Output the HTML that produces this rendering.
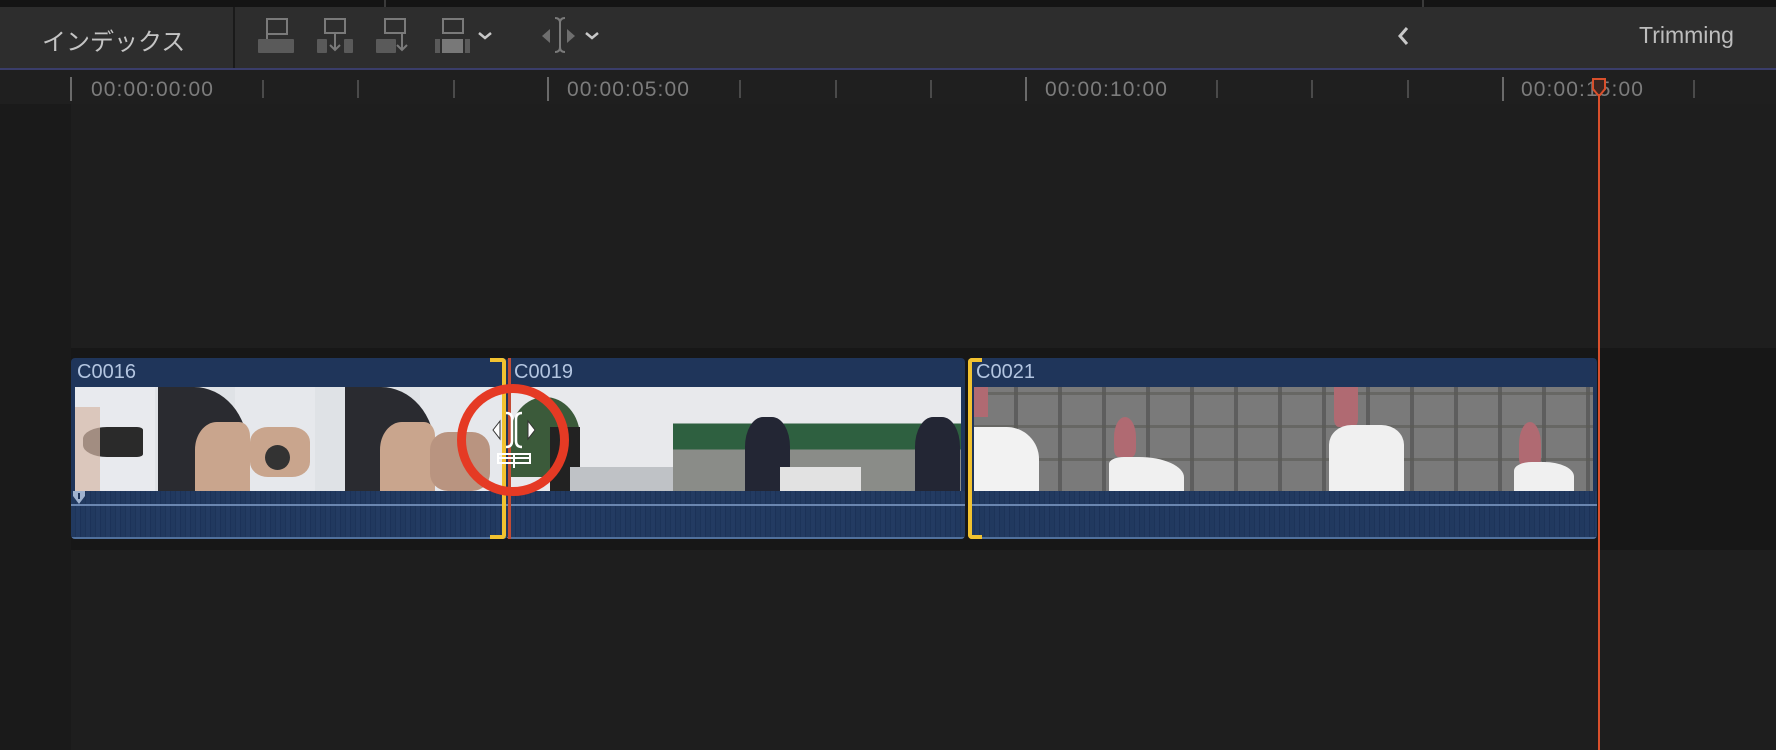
<!DOCTYPE html>
<html><head><meta charset="utf-8"><style>
*{margin:0;padding:0;box-sizing:border-box}
body{width:1776px;height:750px;background:#1e1e1e;position:relative;overflow:hidden;font-family:"Liberation Sans","Noto Sans CJK JP",sans-serif}
.a{position:absolute}
.tick{position:absolute;width:2px;background:#4a4a4a}
.tl{position:absolute;top:78px;color:#7c7c7c;font-size:21px;letter-spacing:1.1px}
.clip{position:absolute;top:358px;height:181px;background:#1f355a;border-radius:4px;overflow:hidden}
.hdr{position:absolute;left:6px;top:3px;color:#b3c5e0;font-size:20px}
.th{position:absolute;top:29px;height:104px;overflow:hidden}
.aud{position:absolute;left:0;right:0;top:133px;bottom:0;background:repeating-linear-gradient(90deg,#21395f 0 4px,#1d3459 4px 5px,#233b62 5px 9px,#1c3258 9px 10px)}
.aud:before{content:"";position:absolute;left:0;right:0;top:13px;height:2px;background:#6a86b0}
.aud:after{content:"";position:absolute;left:0;right:0;bottom:0;height:2px;background:#50709c}
</style></head><body>
<div class="a" style="left:0;top:0;width:1776px;height:7px;background:#141414"></div>
<div class="a" style="left:384px;top:0;width:2px;height:7px;background:#3a3a3a"></div>
<div class="a" style="left:1422px;top:0;width:2px;height:7px;background:#3a3a3a"></div>
<div class="a" style="left:0;top:7px;width:1776px;height:61px;background:#2d2d2d"></div>
<div class="a" style="left:233px;top:7px;width:2px;height:61px;background:#1a1a1a"></div>
<div class="a" style="left:0;top:68px;width:1776px;height:2px;background:#3a3d6a"></div>
<div class="a" style="left:42px;top:22px;color:#c4c4c4;font-size:24px">インデックス</div>
<svg class="a" style="left:0;top:0" width="620" height="68">
 <g fill="none" stroke="#7a7a7a" stroke-width="2">
  <rect x="267" y="19" width="20" height="15"/><line x1="267" y1="34" x2="267" y2="41"/>
  <rect x="325" y="19" width="20" height="14"/><line x1="335" y1="33" x2="335" y2="50"/><polyline points="330,45 335,50 340,45"/>
  <rect x="385" y="19" width="20" height="14"/><line x1="402" y1="33" x2="402" y2="50"/><polyline points="397,45 402,50 407,45"/>
  <rect x="443" y="19" width="20" height="14"/>
  <path d="M555 18 q5 0 5 5 v24 q0 5 -5 5 M565 18 q-5 0 -5 5 v24 q0 5 5 5"/>
 </g>
 <g fill="none" stroke="#c8c8c8" stroke-width="2.5">
  <polyline points="479,33 485,38 491,33"/>
  <polyline points="586,33 592,38 598,33"/>
 </g>
 <g fill="#5a5a5a">
  <rect x="258" y="39" width="36" height="14" rx="1"/>
  <rect x="317" y="39" width="10" height="14" rx="1"/><rect x="344" y="39" width="9" height="14" rx="1"/>
  <rect x="376" y="39" width="20" height="14" rx="1"/>
  <rect x="435" y="39" width="5" height="14"/><rect x="442" y="39" width="21" height="14" fill="#787878"/><rect x="465" y="39" width="5" height="14"/>
  <polygon points="550,29 542,36 550,43" fill="#6e6e6e"/><polygon points="567,29 575,36 567,43" fill="#6e6e6e"/>
 </g>
</svg>
<svg class="a" style="left:1396px;top:25px" width="16" height="22"><polyline points="11,3 4,11 11,19" fill="none" stroke="#c8c8c8" stroke-width="3"/></svg>
<div class="a" style="left:1639px;top:22px;color:#bdbdbd;font-size:23px">Trimming</div>
<div class="a" style="left:0;top:70px;width:1776px;height:34px;background:#1f1f1f"></div>
<div class="tick" style="left:70px;top:77px;height:24px;background:#6a6a6a"></div>
<div class="tick" style="left:547px;top:77px;height:24px;background:#6a6a6a"></div>
<div class="tick" style="left:1025px;top:77px;height:24px;background:#6a6a6a"></div>
<div class="tick" style="left:1502px;top:77px;height:24px;background:#6a6a6a"></div>
<div class="tick" style="left:262px;top:80px;height:18px"></div><div class="tick" style="left:357px;top:80px;height:18px"></div><div class="tick" style="left:453px;top:80px;height:18px"></div>
<div class="tick" style="left:739px;top:80px;height:18px"></div><div class="tick" style="left:835px;top:80px;height:18px"></div><div class="tick" style="left:930px;top:80px;height:18px"></div>
<div class="tick" style="left:1216px;top:80px;height:18px"></div><div class="tick" style="left:1311px;top:80px;height:18px"></div><div class="tick" style="left:1407px;top:80px;height:18px"></div>
<div class="tick" style="left:1693px;top:80px;height:18px"></div>
<div class="tl" style="left:91px">00:00:00:00</div>
<div class="tl" style="left:567px">00:00:05:00</div>
<div class="tl" style="left:1045px">00:00:10:00</div>
<div class="tl" style="left:1521px">00:00:15:00</div>
<div class="a" style="left:0;top:104px;width:71px;height:646px;background:#1a1a1a"></div>
<div class="a" style="left:71px;top:348px;width:1705px;height:202px;background:#171717"></div>
<div class="clip" style="left:71px;width:436px">
 <div class="hdr">C0016</div>
 <div class="th" style="left:4px;width:428px;background:linear-gradient(90deg,#e8eaee 0 80px,#dfe2e6 80px 160px,#e6e8ec 160px 240px,#dfe2e6 240px 345px,#e6e8ec 345px)">
  <div class="a" style="left:8px;top:40px;width:60px;height:30px;background:#2a2a2a;border-radius:40% 10% 10% 40%"></div>
  <div class="a" style="left:0;top:20px;width:25px;height:84px;background:#d6b8a6;opacity:.7"></div>
  <div class="a" style="left:83px;top:0;width:90px;height:104px;background:#2a2b30;border-radius:0 60% 0 0"></div>
  <div class="a" style="left:120px;top:35px;width:55px;height:69px;background:#c9a58d;border-radius:40% 20% 0 0"></div>
  <div class="a" style="left:175px;top:40px;width:60px;height:50px;background:#c9a58d;border-radius:30%"></div>
  <div class="a" style="left:190px;top:58px;width:25px;height:25px;background:#333;border-radius:50%"></div>
  <div class="a" style="left:270px;top:0;width:90px;height:104px;background:#2a2b30;border-radius:0 60% 0 0"></div>
  <div class="a" style="left:305px;top:35px;width:55px;height:69px;background:#c9a58d;border-radius:40% 20% 0 0"></div>
  <div class="a" style="left:355px;top:45px;width:60px;height:59px;background:#b99480;border-radius:30%"></div>
 </div>
 <div class="aud"></div>
</div>
<div class="clip" style="left:506px;width:459px">
 <div class="hdr" style="left:8px">C0019</div>
 <div class="th" style="left:4px;width:451px;background:#e8e9ec">
  <div class="a" style="left:0;top:10px;width:70px;height:80px;background:#3b5a3a;border-radius:50% 50% 0 0"></div>
  <div class="a" style="left:40px;top:40px;width:30px;height:64px;background:#222"></div>
  <div class="a" style="left:60px;top:80px;width:130px;height:24px;background:#bfc2c6"></div>
  <div class="a" style="left:163px;top:0;width:188px;height:104px;background:linear-gradient(180deg,#e8e9ec 0 35%,#2e6040 35% 60%,#8a8c88 60%)"></div>
  <div class="a" style="left:235px;top:30px;width:45px;height:74px;background:#232634;border-radius:40% 40% 0 0"></div>
  <div class="a" style="left:270px;top:80px;width:81px;height:24px;background:#e2e2e2"></div>
  <div class="a" style="left:351px;top:0;width:100px;height:104px;background:linear-gradient(180deg,#e8e9ec 0 35%,#2e6040 35% 60%,#8a8c88 60%)"></div>
  <div class="a" style="left:405px;top:30px;width:45px;height:74px;background:#232634;border-radius:40% 40% 0 0"></div>
 </div>
 <div class="aud"></div>
</div>
<div class="clip" style="left:970px;width:627px">
 <div class="hdr" style="left:6px">C0021</div>
 <div class="th" style="left:4px;width:619px;background:repeating-linear-gradient(90deg,#7a7a7a 0 40px,#5e5e5e 40px 44px),#777">
  <div class="a" style="left:0;top:0;width:619px;height:104px;background:repeating-linear-gradient(0deg,transparent 0 30px,#5a5a55 30px 33px);opacity:.6"></div>
  <div class="a" style="left:0;top:40px;width:65px;height:64px;background:#f2f2f2;border-radius:0 50% 0 0"></div>
  <div class="a" style="left:0;top:0;width:14px;height:30px;background:#b06a72"></div>
  <div class="a" style="left:140px;top:30px;width:22px;height:40px;background:#b06a72;border-radius:50% 50% 20% 20%"></div>
  <div class="a" style="left:135px;top:70px;width:75px;height:34px;background:#f0f0f0;border-radius:20% 60% 0 0"></div>
  <div class="a" style="left:360px;top:0;width:24px;height:40px;background:#b06a72;border-radius:0 0 20% 20%"></div>
  <div class="a" style="left:355px;top:38px;width:75px;height:66px;background:#f0f0f0;border-radius:30% 30% 0 0"></div>
  <div class="a" style="left:545px;top:35px;width:22px;height:45px;background:#b06a72;border-radius:50% 50% 20% 20%"></div>
  <div class="a" style="left:540px;top:75px;width:60px;height:29px;background:#f0f0f0;border-radius:30% 50% 0 0"></div>
 </div>
 <div class="aud"></div>
</div>
<div class="a" style="left:490px;top:358px;width:16px;height:181px;border:4px solid #f2c230;border-left:none;border-radius:0 4px 4px 0"></div>
<div class="a" style="left:508px;top:358px;width:3px;height:181px;background:#c44b33"></div>
<div class="a" style="left:968px;top:358px;width:14px;height:181px;border:4px solid #f2c230;border-right:none;border-radius:4px 0 0 4px"></div>
<svg class="a" style="left:72px;top:490px" width="14" height="16"><path d="M1 1 h12 v5 l-6 8 l-6 -8z" fill="#9fb2cf"/><rect x="6" y="3" width="2" height="6" fill="#1e3459"/></svg>
<div class="a" style="left:1598px;top:88px;width:2px;height:662px;background:#d9502c"></div>
<svg class="a" style="left:1591px;top:78px" width="16" height="26"><path d="M2 1 h12 v10 l-5 6 h-2 l-5 -6z" fill="#3a2520" stroke="#d9502c" stroke-width="2"/></svg>
<div class="a" style="left:457px;top:384px;width:112px;height:112px;border:9px solid #e53a24;border-radius:50%"></div>
<svg class="a" style="left:490px;top:410px" width="48" height="64" viewBox="0 0 48 64">
 <polygon points="10,11 3,20 10,29" fill="#fff" stroke="#333" stroke-width="1"/>
 <polygon points="38,11 45,20 38,29" fill="#fff" stroke="#333" stroke-width="1"/>
 <path d="M16 3 q6 0 6 6 v22 q0 6 -6 6 M32 3 q-6 0 -6 6 v22 q0 6 6 6" fill="none" stroke="#fff" stroke-width="2.5"/>
 <path d="M8 44 h32 v9 h-32z M8 48 h32 M24 44 v14" fill="none" stroke="#fff" stroke-width="2"/>
</svg>
</body></html>
